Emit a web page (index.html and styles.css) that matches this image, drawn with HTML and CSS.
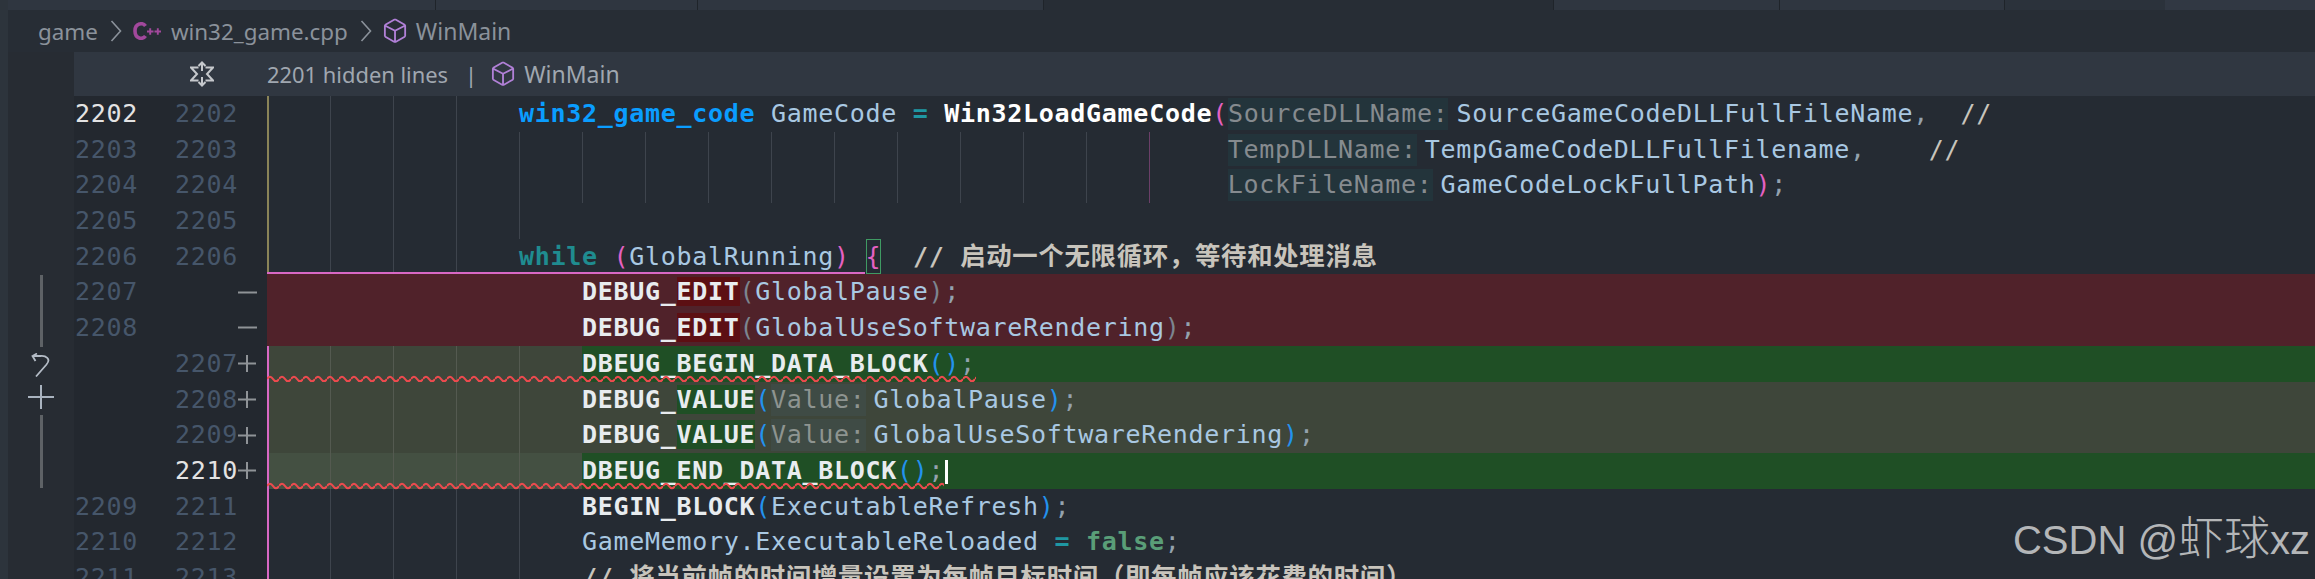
FILE: index.html
```html
<!DOCTYPE html>
<html lang="en">
<head>
<meta charset="utf-8">
<title>win32_game.cpp</title>
<link rel="stylesheet" href="styles.css">
</head>
<body>
<div class="page">
  <div class="activity"></div>
  <div class="main">
    <div class="tabs">
      <div class="tab t1"></div><div class="tab t2"></div><div class="tab t3"></div><div class="tab t4 active"></div>
      <div class="tab t5"></div><div class="tab t6"></div><div class="tab t7"></div><div class="tab t8"></div>
    </div>
    <div class="crumbs">
      <span>game</span>
      <svg class="chev" viewBox="0 0 12 24"><path d="M1.5 2 L10.5 12 L1.5 22"/></svg>
      <svg class="cpp" viewBox="0 0 30 18"><path class="c" d="M12.5 4 C10 .4 2 .8 2 9 C2 17.2 10 17.6 12.5 14"/><path class="p" d="M14 9.5h6.5M17.2 6.2v6.6M21.5 9.5H28M24.8 6.2v6.6"/></svg>
      <span class="fname">win32_game.cpp</span>
      <svg class="chev" viewBox="0 0 12 24"><path d="M1.5 2 L10.5 12 L1.5 22"/></svg>
      <svg class="cube" viewBox="1.5 0.5 13 15" preserveAspectRatio="none"><path d="M13.51 4l-5-3h-1l-5 3-.49.86v6l.49.85 5 3h1l5-3 .49-.85v-6L13.51 4zm-6 9.56l-4.5-2.7V5.7l4.5 2.45v5.41zM3.27 4.7l4.74-2.84 4.74 2.84-4.74 2.59L3.27 4.7zm9.74 6.16l-4.5 2.7V8.15l4.5-2.45v5.16z"/></svg>
      <span class="sym">WinMain</span>
    </div>
    <div class="body">
      <div class="rail">
        <div class="bar first"></div>
        <svg class="undo" viewBox="0 0 20 24"><path d="M5 23.5 L15.5 11.5 C20.5 5.5 14.5 2.5 9.5 3 H1.5 M6 .5 L1.5 3 L4.5 8"/></svg>
        <svg class="add" viewBox="0 0 26 24"><path d="M0 12H26M13 0V24"/></svg>
        <div class="bar"></div>
      </div>
      <div class="pane">
        <div class="sticky">
          <div class="sticky-gut">
            <svg class="fold" viewBox="0 0 24 26"><path d="M12 10V1.5M8.5 5L12 1.5L15.5 5M12 16v8.5M8.5 21l3.5 3.5 3.5-3.5M8.5 6.5H1L7 13 1 19.5H8.5M15.5 6.5H23L17 13l6 6.5H15.5"/></svg>
          </div>
          <span>2201 hidden lines</span>
          <span class="pipe">|</span>
          <svg class="cube" viewBox="1.5 0.5 13 15" preserveAspectRatio="none"><path d="M13.51 4l-5-3h-1l-5 3-.49.86v6l.49.85 5 3h1l5-3 .49-.85v-6L13.51 4zm-6 9.56l-4.5-2.7V5.7l4.5 2.45v5.41zM3.27 4.7l4.74-2.84 4.74 2.84-4.74 2.59L3.27 4.7zm9.74 6.16l-4.5 2.7V8.15l4.5-2.45v5.16z"/></svg>
          <span class="sym">WinMain</span>
        </div>

        <div class="row">
          <div class="gut"><span class="old cur">2202</span><span class="new">2202</span><span class="sign"></span></div>
          <div class="code"><i class="ind y"></i><i class="ind"></i><i class="ind"></i><i class="ind"></i><div class="txt"><b class="type">win32_game_code</b> <span class="var">GameCode</span> <b class="op">=</b> <b class="fn">Win32LoadGameCode</b><span class="pk">(</span><span class="hint">SourceDLLName:</span><span class="var">SourceGameCodeDLLFullFileName</span><span class="punc">,</span>  <span class="cm">//</span></div></div>
        </div>
        <div class="row">
          <div class="gut"><span class="old">2203</span><span class="new">2203</span><span class="sign"></span></div>
          <div class="code"><i class="ind y"></i><i class="ind"></i><i class="ind"></i><i class="ind"></i><i class="ind"></i><i class="ind"></i><i class="ind"></i><i class="ind"></i><i class="ind"></i><i class="ind"></i><i class="ind"></i><i class="ind"></i><i class="ind"></i><i class="ind"></i><i class="ind m"></i><div class="txt"> <span class="hint">TempDLLName:</span><span class="var">TempGameCodeDLLFullFilename</span><span class="punc">,</span>    <span class="cm">//</span></div></div>
        </div>
        <div class="row">
          <div class="gut"><span class="old">2204</span><span class="new">2204</span><span class="sign"></span></div>
          <div class="code"><i class="ind y"></i><i class="ind"></i><i class="ind"></i><i class="ind"></i><i class="ind"></i><i class="ind"></i><i class="ind"></i><i class="ind"></i><i class="ind"></i><i class="ind"></i><i class="ind"></i><i class="ind"></i><i class="ind"></i><i class="ind"></i><i class="ind m"></i><div class="txt"> <span class="hint">LockFileName:</span><span class="var">GameCodeLockFullPath</span><span class="pk">)</span><span class="punc">;</span></div></div>
        </div>
        <div class="row">
          <div class="gut"><span class="old">2205</span><span class="new">2205</span><span class="sign"></span></div>
          <div class="code"><i class="ind y"></i><i class="ind"></i><i class="ind"></i><i class="ind"></i><i class="ind"></i></div>
        </div>
        <div class="row">
          <div class="gut"><span class="old">2206</span><span class="new">2206</span><span class="sign"></span></div>
          <div class="code"><i class="ind y"></i><i class="ind"></i><i class="ind"></i><i class="ind"></i><div class="txt"><b class="kw">while</b> <span class="pk">(</span><span class="var">GlobalRunning</span><span class="pk">)</span> <span class="brace">{</span>  <b class="cm">// <span class="cjk">启动一个无限循环，等待和处理消息</span></b></div><div class="scope"></div></div>
        </div>

        <div class="row">
          <div class="gut"><span class="old">2207</span><span class="new"></span><span class="sign"><svg class="mk" viewBox="0 0 19 19"><path d="M0 9.5H19"/></svg></span></div>
          <div class="code del"><i class="ind n"></i><i class="ind n"></i><i class="ind n"></i><i class="ind n"></i><i class="ind n"></i><div class="txt"><b class="mac">DEBUG_<span class="delw">EDIT</span></b><span class="gr">(</span><span class="var">GlobalPause</span><span class="gr">)</span><span class="punc">;</span></div></div>
        </div>
        <div class="row">
          <div class="gut"><span class="old">2208</span><span class="new"></span><span class="sign"><svg class="mk" viewBox="0 0 19 19"><path d="M0 9.5H19"/></svg></span></div>
          <div class="code del"><i class="ind n"></i><i class="ind n"></i><i class="ind n"></i><i class="ind n"></i><i class="ind n"></i><div class="txt"><b class="mac">DEBUG_<span class="delw">EDIT</span></b><span class="gr">(</span><span class="var">GlobalUseSoftwareRendering</span><span class="gr">)</span><span class="punc">;</span></div></div>
        </div>

        <div class="row">
          <div class="gut"><span class="new gap">2207</span><span class="sign"><svg class="mk" viewBox="0 0 19 19"><path d="M0 9.5H18M9 1V18"/></svg></span></div>
          <div class="code ins"><i class="ind p"></i><i class="ind"></i><i class="ind"></i><i class="ind"></i><i class="ind"></i><div class="txt full"><b class="mac">DBEUG_BEGIN_DATA_BLOCK</b><span class="bl">()</span><span class="punc">;</span></div>
            <svg class="squig s1"><defs><pattern id="wave" width="12" height="8" patternUnits="userSpaceOnUse"><path d="M0 4 Q3 -.6 6 4 T12 4"/></pattern></defs><rect width="100%" height="100%" fill="url(#wave)"/></svg>
          </div>
        </div>
        <div class="row">
          <div class="gut"><span class="new gap">2208</span><span class="sign"><svg class="mk" viewBox="0 0 19 19"><path d="M0 9.5H18M9 1V18"/></svg></span></div>
          <div class="code ins"><i class="ind p"></i><i class="ind"></i><i class="ind"></i><i class="ind"></i><i class="ind"></i><div class="txt"><b class="mac">DEBUG_<span class="insw">VALUE</span></b><span class="bl">(</span><span class="hint onins">Value:</span><span class="var">GlobalPause</span><span class="bl">)</span><span class="punc">;</span></div></div>
        </div>
        <div class="row">
          <div class="gut"><span class="new gap">2209</span><span class="sign"><svg class="mk" viewBox="0 0 19 19"><path d="M0 9.5H18M9 1V18"/></svg></span></div>
          <div class="code ins"><i class="ind p"></i><i class="ind"></i><i class="ind"></i><i class="ind"></i><i class="ind"></i><div class="txt"><b class="mac">DEBUG_<span class="insw">VALUE</span></b><span class="bl">(</span><span class="hint onins">Value:</span><span class="var">GlobalUseSoftwareRendering</span><span class="bl">)</span><span class="punc">;</span></div></div>
        </div>
        <div class="row">
          <div class="gut"><span class="new gap cur">2210</span><span class="sign"><svg class="mk" viewBox="0 0 19 19"><path d="M0 9.5H18M9 1V18"/></svg></span></div>
          <div class="code ins curline"><i class="ind p"></i><i class="ind"></i><i class="ind"></i><i class="ind"></i><i class="ind"></i><div class="txt full"><b class="mac">DBEUG_END_DATA_BLOCK</b><span class="bl">()</span><span class="punc">;</span><i class="caret"></i></div>
            <svg class="squig s2"><rect width="100%" height="100%" fill="url(#wave)"/></svg>
          </div>
        </div>

        <div class="row">
          <div class="gut"><span class="old">2209</span><span class="new">2211</span><span class="sign"></span></div>
          <div class="code"><i class="ind p"></i><i class="ind"></i><i class="ind"></i><i class="ind"></i><i class="ind"></i><div class="txt"><b class="mac">BEGIN_BLOCK</b><span class="bl">(</span><span class="var">ExecutableRefresh</span><span class="bl">)</span><span class="punc">;</span></div></div>
        </div>
        <div class="row">
          <div class="gut"><span class="old">2210</span><span class="new">2212</span><span class="sign"></span></div>
          <div class="code"><i class="ind p"></i><i class="ind"></i><i class="ind"></i><i class="ind"></i><i class="ind"></i><div class="txt"><span class="var">GameMemory.ExecutableReloaded</span> <b class="op">=</b> <b class="bool">false</b><span class="punc">;</span></div></div>
        </div>
        <div class="row">
          <div class="gut"><span class="old">2211</span><span class="new">2213</span><span class="sign"></span></div>
          <div class="code"><i class="ind p"></i><i class="ind"></i><i class="ind"></i><i class="ind"></i><i class="ind"></i><div class="txt"><b class="cm">// <span class="cjk">将当前帧的时间增量设置为每帧目标时间（即每帧应该花费的时间）</span></b></div></div>
        </div>
      </div>
    </div>
  </div>
</div>
<div class="mark">CSDN @<span class="mark-cjk">虾球</span>xz</div>
</body>
</html>
```
FILE: styles.css
```css
* { box-sizing: border-box; }
html, body { margin: 0; height: 579px; overflow: hidden; background: #252b33; }
.page { display: flex; width: 2315px; height: 579px; overflow: hidden; }
.activity { width: 8px; flex: none; background: #2d343c; }
.main { flex: 1; min-width: 0; display: flex; flex-direction: column; }

.tabs { height: 10px; flex: none; display: flex; background: #2f3640; }
.tab { flex: none; border-right: 1px solid #1f242a; }
.t1 { width: 428px; }
.t2 { width: 262px; }
.t3 { width: 346px; }
.t4 { width: 510px; }
.t5 { width: 226px; }
.t6 { width: 225px; }
.t7 { width: 160px; border-right: 0; background: #2b323b; }
.t8 { flex: 1; border-right: 0; background: #313843; }
.active { background: #272d35; }

.crumbs { height: 42px; flex: none; display: flex; align-items: center; padding-left: 30px; background: #272d35; color: #8b929b; font: 22.4px "Noto Sans", sans-serif; }
.chev { width: 12px; height: 24px; margin: 0 11px 0 12px; flex: none; }
.chev path { fill: none; stroke: #8b929b; stroke-width: 1.6; }
.cpp { width: 30px; height: 18px; flex: none; margin-right: 8px; }
.cpp .c { fill: none; stroke: #a2489c; stroke-width: 3.6; }
.cpp .p { fill: none; stroke: #a2489c; stroke-width: 1.9; }
.cube { width: 24px; height: 26px; flex: none; margin-right: 9px; }
.cube path { fill: #b180d7; }
.sym { font-size: 23px; }

.body { flex: 1; min-height: 0; display: flex; }
.rail { width: 66px; flex: none; display: flex; flex-direction: column; align-items: center; padding-top: 223px; background: #272c33; }
.bar { width: 3px; height: 73px; margin-top: 6px; background: #5e6266; }
.bar.first { margin-top: 0; height: 72px; }
.undo { width: 20px; height: 24px; margin-top: 6px; flex: none; }
.undo path { fill: none; stroke: #b4bcc6; stroke-width: 1.8; }
.add { width: 26px; height: 24px; margin-top: 8px; flex: none; }
.add path { fill: none; stroke: #a9b3bf; stroke-width: 2; }

.pane { flex: 1; min-width: 0; }
.sticky { height: 44px; display: flex; align-items: center; background: #303741; color: #a0a7b0; font: 21.9px "Noto Sans", sans-serif; }
.sticky-gut { width: 193px; flex: none; padding-left: 116px; display: flex; }
.fold { width: 24px; height: 26px; }
.fold path { fill: none; stroke: #c5c8cc; stroke-width: 2; }
.pipe { margin: 0 14px 0 17px; }

.row { display: flex; height: 35.7px; font: 25px/35.7px "DejaVu Sans Mono", "Noto Sans CJK SC", monospace; letter-spacing: .7px; white-space: pre; }
.gut { width: 193px; flex: none; display: flex; background: #23282f; color: #46566a; padding-left: 1px; }
.old { width: 100px; flex: none; }
.new { width: 63px; flex: none; }
.new.gap { margin-left: 100px; }
.sign { flex: 1; display: flex; align-items: center; }
.mk { width: 19px; height: 19px; }
.mk path { fill: none; stroke: #8f9397; stroke-width: 2; }
.cur { color: #e3e3e3; }

.code { flex: 1; min-width: 0; display: flex; position: relative; }
.ind { width: 63px; flex: none; display: block; border-left: 1px solid #3e444d; }
.ind.y { border-left: 2px solid #8a8458; }
.ind.p { border-left: 2px solid #d868c4; }
.ind.m { border-left-color: #6b3f68; }
.ind.n { border-left: 0; }
.txt { flex: 1; min-width: 0; color: #a9c4dc; }

.del { background: #50222a; }
.ins { background: #3e463a; }
.ins .ind { border-left-color: #545a50; }
.ins .ind.p { border-left-color: #d868c4; }
.curline > .ind { background: #445042; }
.full { background: #1f4f25; }
.delw { background: #5c0f13; }
.insw { background: #1f4f25; }

.type { color: #0a9dff; }
.var { color: #a9c8e2; }
.op { color: #1f97a3; }
.fn { color: #fff; }
.kw { color: #1f8c90; }
.mac { color: #e8ecef; }
.cm { color: #c8c4bc; }
.cjk { font-size: 25.4px; letter-spacing: .7px; }
.bool { color: #5a9e78; }
.pk { color: #e561c3; }
.bl { color: #2392ee; }
.gr { color: #7c8590; }
.punc { color: #94a2ae; }
.hint { display: inline-block; line-height: 32px; height: 32px; margin-right: 8px; background: #23343b; color: #868b8f; }
.hint.onins { background: #3f4b45; color: #8e9490; }
.brace { display: inline-block; height: 35.7px; vertical-align: top; color: #e561c3; box-shadow: inset 0 0 0 1px #3f9a63; }
.scope { position: absolute; left: 0; bottom: 0; width: 598px; height: 2px; background: #d868c4; }
.caret { display: inline-block; width: 3px; height: 24px; margin-left: 1px; vertical-align: -5px; background: #fff; }

.squig { position: absolute; left: 0; height: 8px; bottom: -1px; overflow: hidden; }
.squig path { fill: none; stroke: #ee4a4e; stroke-width: 2.1; }
.s1 { width: 709px; }
.s2 { width: 677px; }

.mark { position: absolute; right: 5px; top: 514px; color: #b4b6b8; font: 40px/48px "Liberation Sans", "Noto Sans CJK SC", sans-serif; white-space: pre; }
.mark-cjk { font-size: 46px; font-weight: 300; }
```
